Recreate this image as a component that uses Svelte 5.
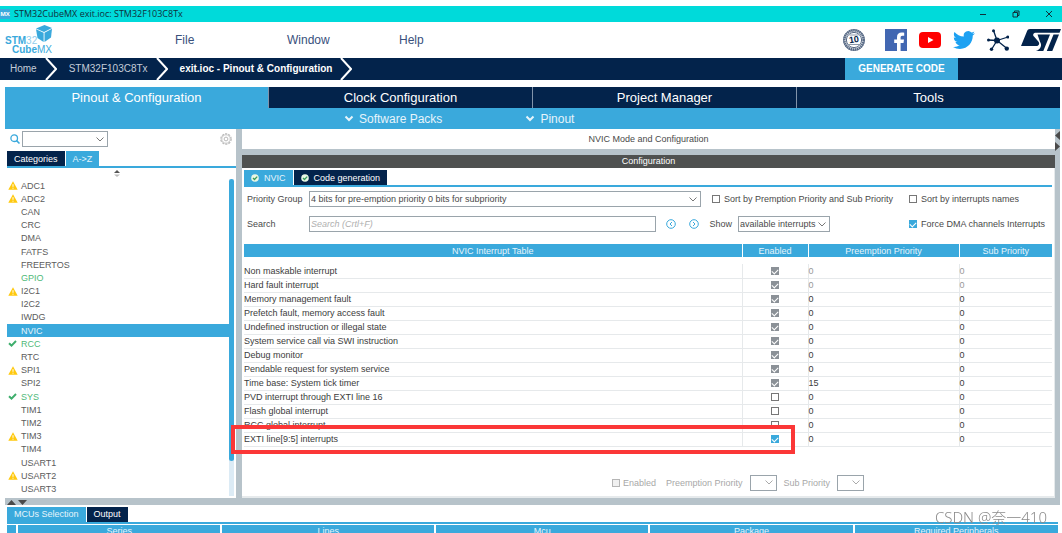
<script lang="ts">
	const tabs = ['Pinout & Configuration', 'Clock Configuration', 'Project Manager', 'Tools'];
	const mcuColumns = ['Series', 'Lines', 'Mcu', 'Package', 'Required Peripherals'];

	type Peripheral = { name: string; state?: 'warning' | 'ok' | 'used' | 'selected' };
	const peripherals: Peripheral[] = [
		{ name: 'ADC1', state: 'warning' },
		{ name: 'ADC2', state: 'warning' },
		{ name: 'CAN' },
		{ name: 'CRC' },
		{ name: 'DMA' },
		{ name: 'FATFS' },
		{ name: 'FREERTOS' },
		{ name: 'GPIO', state: 'used' },
		{ name: 'I2C1', state: 'warning' },
		{ name: 'I2C2' },
		{ name: 'IWDG' },
		{ name: 'NVIC', state: 'selected' },
		{ name: 'RCC', state: 'ok' },
		{ name: 'RTC' },
		{ name: 'SPI1', state: 'warning' },
		{ name: 'SPI2' },
		{ name: 'SYS', state: 'ok' },
		{ name: 'TIM1' },
		{ name: 'TIM2' },
		{ name: 'TIM3', state: 'warning' },
		{ name: 'TIM4' },
		{ name: 'USART1' },
		{ name: 'USART2', state: 'warning' },
		{ name: 'USART3' }
	];

	let interrupts = $state([
		{ name: 'Non maskable interrupt', enabled: true, locked: true, fixed: true, priority: 0, sub: 0 },
		{ name: 'Hard fault interrupt', enabled: true, locked: true, fixed: true, priority: 0, sub: 0 },
		{ name: 'Memory management fault', enabled: true, locked: true, priority: 0, sub: 0 },
		{ name: 'Prefetch fault, memory access fault', enabled: true, locked: true, priority: 0, sub: 0 },
		{ name: 'Undefined instruction or illegal state', enabled: true, locked: true, priority: 0, sub: 0 },
		{ name: 'System service call via SWI instruction', enabled: true, locked: true, priority: 0, sub: 0 },
		{ name: 'Debug monitor', enabled: true, locked: true, priority: 0, sub: 0 },
		{ name: 'Pendable request for system service', enabled: true, locked: true, priority: 0, sub: 0 },
		{ name: 'Time base: System tick timer', enabled: true, locked: true, priority: 15, sub: 0 },
		{ name: 'PVD interrupt through EXTI line 16', enabled: false, priority: 0, sub: 0 },
		{ name: 'Flash global interrupt', enabled: false, priority: 0, sub: 0 },
		{ name: 'RCC global interrupt', enabled: false, priority: 0, sub: 0 },
		{ name: 'EXTI line[9:5] interrupts', enabled: true, priority: 0, sub: 0 }
	]);

	let sortByPriority = $state(false);
	let sortByName = $state(false);
	let forceDma = $state(true);
</script>

{#snippet arrow()}
	<svg class="arrow" width="8" height="5" viewBox="0 0 8 5"><path d="M.5.5 4 4 7.5.5" /></svg>
{/snippet}

{#snippet crumbEdge()}
	<svg class="crumb-edge" width="12" height="22" viewBox="0 0 12 22"><path d="M1 0 11 11 1 22" /></svg>
{/snippet}

{#snippet okBadge()}
	<svg width="8" height="8" viewBox="0 0 8 8">
		<circle cx="4" cy="4" r="3.8" fill="#e9f7e4" />
		<path d="M2 4 3.5 5.5 6.2 2.6" fill="none" stroke="#3a9c5a" stroke-width="1.3" />
	</svg>
{/snippet}

<div class="app">
	<header class="titlebar">
		<span class="app-icon">MX</span>
		<h1>STM32CubeMX exit.ioc: STM32F103C8Tx</h1>
		<div class="window-buttons">
			<button aria-label="Minimize">
				<svg width="8" height="8" viewBox="0 0 8 8"><path d="M1 4.5h6" /></svg>
			</button>
			<button aria-label="Restore">
				<svg width="8" height="8" viewBox="0 0 8 8"><path d="M1 2.5h4.5V7H1zM2.5 2.5V1H7v4.500H5.500" /></svg>
			</button>
			<button aria-label="Close">
				<svg width="8" height="8" viewBox="0 0 8 8"><path d="M1 1l6 6M7 1 1 7" /></svg>
			</button>
		</div>
	</header>

	<div class="menubar">
		<svg class="logo" width="50" height="30" viewBox="0 0 50 30" role="img" aria-label="STM32 CubeMX">
			<text x="0" y="19"><tspan font-weight="bold">STM</tspan><tspan fill="#8fcdec">32</tspan></text>
			<text x="7" y="28"><tspan font-weight="bold">Cube</tspan><tspan>MX</tspan></text>
			<path d="M31 3.500 39.500 0 47 3 39 7z" fill="#3aa9dc" />
			<path d="M31 4.300 38.600 7.800V17L32.500 13z" fill="#3aa9dc" />
			<path d="M39.500 7.800 47 3.800 46 12.500 39.500 17z" fill="#3aa9dc" />
		</svg>
		<nav>
			<button>File</button>
			<button>Window</button>
			<button>Help</button>
		</nav>
		<div class="social">
			<a href="#anniversary" class="anniversary" aria-label="10 years">
				<svg width="22" height="22" viewBox="0 0 22 22">
					<circle cx="11" cy="11" r="9.600" fill="#fff" stroke="#596b86" stroke-width="2.600" stroke-dasharray="1.600 .5" />
					<circle cx="11" cy="11" r="10.500" fill="none" stroke="#596b86" stroke-width=".8" />
					<circle cx="11" cy="11" r="7.600" fill="none" stroke="#596b86" stroke-width="1" />
					<path d="M5 15.500h12M6.500 6h9" stroke="#8b98aa" stroke-width="1.200" />
					<text x="11" y="13.500" transform="rotate(-8 11 11)" text-anchor="middle" font-size="9" font-weight="bold" fill="#03234b">10</text>
				</svg>
			</a>
			<a href="#facebook" aria-label="Facebook">
				<svg width="22" height="22" viewBox="0 0 22 22">
					<path d="M0 0h22v22H0z" fill="#4267b2" />
					<path d="M12 22v-8H9.200v-3.400H12V8.200C12 5 13.800 3.500 16.700 3.500c1.200 0 2 .1 2.500.2v3h-1.700c-1.500 0-1.900.8-1.900 1.900v2h3.400l-.5 3.400h-2.900v8z" fill="#fff" />
				</svg>
			</a>
			<a href="#youtube" aria-label="YouTube">
				<svg width="22" height="22" viewBox="0 0 22 22">
					<rect y="3" width="22" height="16" rx="4" fill="#f00" />
					<path d="M9 8v6l5.500-3z" fill="#fff" />
				</svg>
			</a>
			<a href="#twitter" aria-label="Twitter">
				<svg width="22" height="22" viewBox="0 0 24 24">
					<path
						fill="#1da1f2"
						d="M23.950 4.570a10 10 0 0 1-2.820.77 4.960 4.960 0 0 0 2.160-2.720c-.95.55-2 .95-3.130 1.180a4.920 4.920 0 0 0-8.380 4.480C7.690 8.100 4.070 6.130 1.640 3.160a4.820 4.820 0 0 0-.67 2.480c0 1.710.87 3.210 2.190 4.100a4.900 4.900 0 0 1-2.230-.62v.06a4.920 4.920 0 0 0 3.950 4.830 5 5 0 0 1-2.210.08 4.940 4.940 0 0 0 4.600 3.420A9.870 9.870 0 0 1 0 19.540a13.990 13.990 0 0 0 7.550 2.210c9.050 0 14-7.500 14-13.980 0-.21 0-.42-.02-.63a9.940 9.940 0 0 0 2.460-2.550z"
					/>
				</svg>
			</a>
			<a href="#community" aria-label="Community">
				<svg width="22" height="22" viewBox="0 0 22 22">
					<path d="M10 11.500 6.500 1.500M10 11.500 21 8M10 11.500 1 11M10 11.500 4.500 20.500M10 11.500l10 8" stroke="#03234b" stroke-width="1.300" />
					<g fill="#03234b">
						<circle cx="10" cy="11.500" r="3" />
						<circle cx="6.500" cy="1.800" r="1.500" />
						<circle cx="20.700" cy="8" r="1.500" />
						<circle cx="1.500" cy="11" r="1.500" />
						<circle cx="4.500" cy="20.200" r="1.700" />
						<circle cx="19.800" cy="19.600" r="2.200" />
					</g>
				</svg>
			</a>
			<a href="#st" aria-label="ST">
				<svg width="40" height="22" viewBox="0 0 40 22">
					<g fill="#03234b">
						<path d="M9 0H40l-1.500 3.700H15c-2.600 0-3.600 2-2 3.900l4.300 4.900c1.700 2 .7 4.500-1.800 4.500H0L6 2.200C6.600.7 7.500 0 9 0z" />
						<path d="M16.500 5.500H29L22.300 22h-7.500c4.600-1.200 6.700-5.700 4.200-9.300z" />
						<path d="M32.500 5.500H38L31.300 22h-5.500z" />
					</g>
				</svg>
			</a>
		</div>
	</div>

	<div class="breadcrumb">
		<a href="#home">Home</a>
		{@render crumbEdge()}
		<a href="#mcu">STM32F103C8Tx</a>
		{@render crumbEdge()}
		<a href="#config" class="current">exit.ioc - Pinout & Configuration</a>
		{@render crumbEdge()}
		<button class="generate">GENERATE CODE</button>
	</div>

	<main>
		<div class="tabs">
			{#each tabs as tab, i}
				<button class:active={i === 0}>{tab}</button>
			{/each}
		</div>
		<div class="submenu">
			<button>{@render arrow()}Software Packs</button>
			<button>{@render arrow()}Pinout</button>
		</div>

		<div class="workspace">
			<aside>
				<div class="finder">
					<svg width="10" height="10" viewBox="0 0 10 10">
						<circle cx="4.200" cy="4.200" r="3.300" fill="none" stroke="#3aa9dc" stroke-width="1.300" />
						<path d="M6.600 6.600 9.500 9.500" stroke="#3aa9dc" stroke-width="1.500" />
					</svg>
					<span class="select">
						<select aria-label="Search peripherals"><option></option></select>
						{@render arrow()}
					</span>
					<button class="gear" aria-label="Settings">
						<svg width="12" height="12" viewBox="0 0 12 12" fill="none" stroke="#b9b9b9">
							<circle cx="6" cy="6" r="5.200" stroke-dasharray="2.200 1.070" stroke-width="1.200" />
							<circle cx="6" cy="6" r="4.200" stroke-width=".8" />
							<circle cx="6" cy="6" r="1.900" />
						</svg>
					</button>
				</div>
				<div class="small-tabs">
					<button>Categories</button>
					<button class="active">A-&gt;Z</button>
				</div>
				<div class="sorter">
					<svg width="6" height="7" viewBox="0 0 6 7">
						<path d="M0 3 3 0l3 3z" fill="#555" />
						<path d="M0 4.500h6L3 7z" fill="#bbb" />
					</svg>
				</div>
				<div class="scroller">
					<ul>
						{#each peripherals as item}
							<li class={item.state}>
								<span class="mark">
									{#if item.state === 'warning'}
										<svg width="10" height="9" viewBox="0 0 10 9">
											<path d="M5 .3 9.700 8.700H.3z" fill="#ffc90e" />
											<path d="M5 3.200v2.600M5 6.700v1" stroke="#fff" />
										</svg>
									{:else if item.state === 'ok'}
										<svg width="9" height="7" viewBox="0 0 9 7">
											<path d="M1 3.300 3.500 5.600 8 1" fill="none" stroke="#3eae6c" stroke-width="2" />
										</svg>
									{/if}
								</span>
								{item.name}
							</li>
						{/each}
					</ul>
					<div class="track"><div class="thumb"></div></div>
				</div>
			</aside>

			<section class="config">
				<h2>NVIC Mode and Configuration</h2>
				<h3>Configuration</h3>
				<div class="panel">
					<div class="small-tabs">
						<button class="active">{@render okBadge()}NVIC</button>
						<button>{@render okBadge()}Code generation</button>
					</div>

					<div class="options">
						<label for="group">Priority Group</label>
						<span class="select group">
							<select id="group"><option>4 bits for pre-emption priority 0 bits for subpriority</option></select>
							{@render arrow()}
						</span>
						<label class="check"><input type="checkbox" bind:checked={sortByPriority} />Sort by Premption Priority and Sub Priority</label>
						<label class="check"><input type="checkbox" bind:checked={sortByName} />Sort by interrupts names</label>

						<label for="search">Search</label>
						<div class="search-row">
							<input id="search" type="text" placeholder="Search (Crtl+F)" />
							<button aria-label="Previous">
								<svg width="10" height="10" viewBox="0 0 10 10"><circle cx="5" cy="5" r="4.300" /><path d="M6 3 4 5l2 2" /></svg>
							</button>
							<button aria-label="Next">
								<svg width="10" height="10" viewBox="0 0 10 10"><circle cx="5" cy="5" r="4.300" /><path d="M4 3l2 2-2 2" /></svg>
							</button>
							<label for="show">Show</label>
							<span class="select show">
								<select id="show"><option>available interrupts</option></select>
								{@render arrow()}
							</span>
						</div>
						<label class="check"><input type="checkbox" bind:checked={forceDma} />Force DMA channels Interrupts</label>
					</div>

					<div class="interrupts">
						<table>
							<thead>
								<tr>
									<th>NVIC Interrupt Table</th>
									<th class="enabled">Enabled</th>
									<th class="preemption">Preemption Priority</th>
									<th class="sub">Sub Priority</th>
								</tr>
							</thead>
							<tbody>
								{#each interrupts as row}
									<tr class:fixed={row.fixed}>
										<td>{row.name}</td>
										<td class="enabled">
											<input type="checkbox" aria-label={row.name} bind:checked={row.enabled} disabled={row.locked} />
										</td>
										<td>{row.priority}</td>
										<td>{row.sub}</td>
									</tr>
								{/each}
							</tbody>
						</table>
						<div class="highlight"></div>
					</div>

					<div class="editor">
						<label class="check"><input type="checkbox" disabled />Enabled</label>
						<label for="preemption">Preemption Priority</label>
						<span class="select">
							<select id="preemption" disabled><option></option></select>
							{@render arrow()}
						</span>
						<label for="sub">Sub Priority</label>
						<span class="select">
							<select id="sub" disabled><option></option></select>
							{@render arrow()}
						</span>
					</div>
				</div>
			</section>

			<div class="side-split">
				<svg width="5" height="20" viewBox="0 0 5 20"><path d="M5 0v9L0 4.500zM0 11v9l5-4.500z" fill="#4a4a4a" /></svg>
			</div>
		</div>

		<div class="bottom-split">
			<svg width="20" height="5" viewBox="0 0 20 5"><path d="M0 5h9L4.500 0zM11 0h9l-4.500 5z" fill="#4a4a4a" /></svg>
		</div>

		<section class="mcus">
			<div class="small-tabs">
				<button class="active">MCUs Selection</button>
				<button>Output</button>
			</div>
			<table>
				<thead>
					<tr>
						<th class="pin" aria-label="Favourite"></th>
						{#each mcuColumns as column}
							<th class:wide={column === 'Lines' || column === 'Mcu'}>{column}</th>
						{/each}
					</tr>
				</thead>
			</table>
		</section>
	</main>

	<div class="watermark">CSDN @奈一410</div>
</div>

<style>
	:global(body) {
		overflow: hidden;
		background: #fff;
	}

	.app {
		padding-top: 6px;
		font-family: 'Liberation Sans', Arial, sans-serif;
		font-size: 9px;
		line-height: 12px;
		color: #4a4a4a;
	}

	.app * {
		box-sizing: border-box;
	}

	button,
	select,
	input {
		font: inherit;
		color: inherit;
		margin: 0;
		padding: 0;
		border: 0;
		border-radius: 0;
		background: none;
		appearance: none;
	}

	button {
		cursor: pointer;
	}

	a {
		color: inherit;
		text-decoration: none;
	}

	svg {
		display: block;
		flex: none;
	}

	h1,
	h2,
	h3 {
		margin: 0;
		font-size: inherit;
		font-weight: normal;
	}

	.titlebar {
		display: flex;
		align-items: center;
		gap: 4px;
		height: 16px;
		background: #00dada;
		color: #10303a;
		font-family: 'Open Sans', 'Noto Sans', sans-serif;
	}

	.app-icon {
		width: 10px;
		height: 10px;
		background: #3aa9dc;
		color: #fff;
		font-size: 6px;
		font-weight: bold;
		line-height: 10px;
		text-align: center;
	}

	.window-buttons {
		display: flex;
		gap: 25px;
		margin-left: auto;
		padding-right: 9px;
	}

	.window-buttons svg {
		fill: none;
		stroke: #10303a;
	}

	.menubar {
		display: flex;
		align-items: center;
		height: 36px;
		padding: 0 1px 0 5px;
	}

	.logo {
		font-family: 'Liberation Sans Narrow', 'Liberation Sans', sans-serif;
		font-size: 10px;
		fill: #3aa9dc;
	}

	.menubar nav {
		display: flex;
		margin-left: 120px;
		color: #39507c;
		font-size: 12px;
		line-height: 16px;
	}

	.menubar nav button {
		width: 112px;
		text-align: left;
	}

	.social {
		display: flex;
		gap: 12px;
		margin-left: auto;
	}

	.anniversary {
		margin-right: 8px;
	}

	.breadcrumb {
		display: flex;
		align-items: center;
		gap: 12px;
		height: 22px;
		padding-left: 10px;
		background: #03234b;
		color: #c4ccd8;
		font-size: 10px;
	}

	.breadcrumb a {
		margin-right: -4px;
	}

	.breadcrumb .current {
		color: #fff;
		font-weight: bold;
	}

	.crumb-edge {
		fill: none;
		stroke: #fff;
		stroke-width: 2;
	}

	.generate {
		align-self: stretch;
		width: 113px;
		margin-left: auto;
		margin-right: 104px;
		background: #3aa9dc;
		color: #fff;
		font-weight: bold;
	}

	main {
		margin: 7px 2px 0 5px;
	}

	.tabs {
		display: grid;
		grid-template-columns: repeat(4, 1fr);
		gap: 1px;
		background: #8193aa;
	}

	.tabs button {
		height: 21px;
		padding-top: 1px;
		background: #03234b;
		color: #fff;
		font-size: 13px;
	}

	.tabs .active {
		background: #3aa9dc;
	}

	.submenu {
		display: flex;
		gap: 84px;
		height: 21px;
		padding-left: 340px;
		background: #3aa9dc;
		color: #e6f4fb;
		font-size: 12px;
	}

	.submenu button {
		display: flex;
		align-items: center;
		gap: 6px;
	}

	.submenu .arrow {
		stroke-width: 2;
		overflow: visible;
	}

	.arrow {
		fill: none;
		stroke: currentColor;
	}

	.workspace {
		display: grid;
		grid-template-columns: 231px 1fr 5px;
		background: #b7c3ca;
	}

	aside {
		display: flex;
		flex-direction: column;
		padding-left: 2px;
		padding-bottom: 2px;
		background: #fff;
	}

	.finder {
		display: flex;
		align-items: center;
		height: 20px;
		padding: 0 4px 0 3px;
		gap: 2px;
	}

	.finder .select {
		width: 86px;
	}

	.gear {
		margin-left: auto;
	}

	.select {
		display: grid;
		align-items: center;
		color: #777;
	}

	.select select {
		grid-area: 1 / 1;
		width: 100%;
		height: 16px;
		padding-left: 1px;
		border: 1px solid #9aa4ab;
		background: #fff;
		color: #4a4a4a;
		opacity: 1;
	}

	.select .arrow {
		grid-area: 1 / 1;
		justify-self: end;
		margin-right: 4px;
		pointer-events: none;
		z-index: 1;
	}

	.small-tabs {
		display: flex;
		gap: 1px;
		padding-top: 2px;
		border-bottom: 2px solid #3aa9dc;
	}

	.small-tabs button {
		display: flex;
		align-items: center;
		gap: 5px;
		height: 15px;
		padding: 0 7px;
		background: #03234b;
		color: #fff;
	}

	.small-tabs .active {
		background: #3aa9dc;
		color: #e6f4fb;
	}

	.sorter {
		display: flex;
		justify-content: center;
		height: 11px;
		padding: 2px 10px 0 0;
	}

	.scroller {
		display: flex;
		flex: 1;
	}

	.scroller ul {
		display: grid;
		flex: 1;
		grid-auto-rows: 1fr;
		margin: 0;
		padding: 0;
		list-style: none;
		color: #5c5c5c;
	}

	.scroller li {
		display: flex;
		align-items: center;
	}

	.mark {
		width: 14px;
		padding-left: 1px;
	}

	.scroller .ok,
	.scroller .used {
		color: #4fb978;
	}

	.scroller .selected {
		background: #3aa9dc;
		color: #e6f4fb;
	}

	.track {
		width: 5px;
		margin-right: 2px;
		background: #dcebf5;
	}

	.thumb {
		height: 89%;
		border-radius: 3px;
		background: #3aa9dc;
	}

	.config {
		margin-left: 6px;
	}

	.config h2 {
		padding: 4px 0;
		background: #fff;
		text-align: center;
	}

	.config h3 {
		margin-top: 6px;
		background: #4f5150;
		color: #fff;
		line-height: 13px;
		text-align: center;
	}

	.panel {
		padding: 0 2px 5px 2px;
		border-right: 1px solid #e6eaec;
		border-bottom: 2px solid #e6eaec;
		background: #fff;
	}

	.options {
		display: grid;
		grid-template-columns: 62px 1fr 197px 143px;
		align-items: center;
		row-gap: 9px;
		padding: 4px 0 12px 3px;
	}

	.group {
		margin-right: 11px;
	}

	.check {
		display: flex;
		align-items: center;
		gap: 4px;
		white-space: nowrap;
	}

	input[type='checkbox'] {
		display: block;
		flex: none;
		width: 8px;
		height: 8px;
		border: 1px solid #777;
		background: #fff;
	}

	input[type='checkbox']:checked {
		border: 0;
		background: #3aa9dc;
	}

	input[type='checkbox']:checked::before {
		content: '';
		display: block;
		width: 5px;
		height: 3px;
		margin: 2px 0 0 1px;
		border: solid #fff;
		border-width: 0 0 1px 1px;
		transform: rotate(-45deg);
	}

	input[type='checkbox']:disabled {
		border-color: #b5b5b5;
		background: #f0f0f0;
	}

	input[type='checkbox']:disabled:checked {
		background: #8b9197;
	}

	.search-row {
		display: flex;
		grid-column: span 2;
		align-items: center;
		gap: 10px;
		padding-right: 79px;
	}

	.search-row input {
		flex: 1;
		height: 16px;
		padding-left: 1px;
		border: 1px solid #9aa4ab;
	}

	.search-row input::placeholder {
		color: #b0b0b0;
		font-style: italic;
		opacity: 1;
	}

	.search-row button + button {
		margin-left: 3px;
	}

	.search-row button svg {
		fill: none;
		stroke: #3aa9dc;
	}

	.search-row .select {
		width: 92px;
		margin-left: -4px;
	}

	table {
		width: 100%;
		border-collapse: collapse;
		table-layout: fixed;
	}

	th {
		height: 13px;
		padding: 0;
		background: #3aa9dc;
		color: #e6f4fb;
		font-weight: normal;
	}

	th + th {
		border-left: 1px solid #fff;
	}

	.interrupts {
		position: relative;
	}

	.interrupts thead::after {
		content: '';
		display: block;
		height: 7px;
	}

	.interrupts td {
		height: 14px;
		padding: 0;
		border-bottom: 1px solid #e6e9eb;
		color: #3c3c3c;
		line-height: 12px;
	}

	.interrupts td + td {
		border-left: 1px solid #e6e9eb;
	}

	.interrupts .fixed td + td {
		color: #999;
	}

	th.enabled {
		width: 66px;
	}

	th.preemption {
		width: 151px;
	}

	th.sub {
		width: 93px;
	}

	td.enabled input {
		margin: 0 auto;
	}

	/* frames the external line interrupt across both panes */
	.highlight {
		position: absolute;
		left: -13px;
		right: 257px;
		bottom: -7px;
		height: 29px;
		border: 4px solid #fb3737;
		pointer-events: none;
	}

	.editor {
		display: flex;
		align-items: center;
		justify-content: center;
		gap: 7px;
		margin-top: 28px;
		padding-left: 180px;
		color: #a8a8a8;
	}

	.editor .check {
		gap: 3px;
		margin-right: 3px;
	}

	.editor .select {
		width: 27px;
		color: #aaa;
	}

	.side-split {
		padding-top: 2px;
	}

	.bottom-split {
		height: 7px;
		padding: 2px 0 0 2px;
		background: #b7c3ca;
	}

	.mcus {
		padding: 0 2px;
	}

	.mcus table {
		margin-top: 1px;
	}

	.mcus th {
		line-height: 11px;
	}

	.mcus .pin {
		width: 10px;
	}

	.mcus .wide {
		width: 214px;
	}

	.mcus th + th {
		border-left-width: 2px;
	}

	.watermark {
		position: fixed;
		right: 15px;
		bottom: 6px;
		color: #8c8c8c;
		font-family: 'Noto Sans', 'Noto Sans CJK SC', sans-serif;
		font-size: 15px;
		font-weight: 300;
		line-height: 20px;
	}
</style>
